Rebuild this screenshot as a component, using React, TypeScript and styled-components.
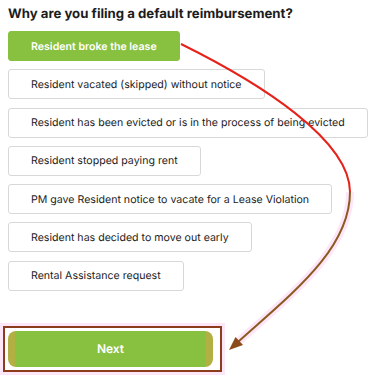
import React from "react";
import styled, { createGlobalStyle } from "styled-components";

const Global = createGlobalStyle`
  html, body { margin: 0; padding: 0; background: #ffffff; }
  body {
    font-family: Inter, "Liberation Sans", Arial, sans-serif;
    text-rendering: geometricPrecision;
  }
  button { text-rendering: geometricPrecision; }
`;

const Page = styled.div`
  position: relative;
  width: 382px;
  height: 378px;
  overflow: hidden;
  box-sizing: border-box;
  padding: 5px 8px 0 8px;
`;

const Title = styled.h1`
  margin: 0 0 8px 0;
  font-size: 13.2px;
  line-height: 18px;
  font-weight: 700;
  color: #1c1c1c;
`;

const Options = styled.div`
  display: flex;
  flex-direction: column;
  align-items: flex-start;
  gap: 8.3px;
`;

const Option = styled.button<{ $selected?: boolean }>`
  height: 30px;
  box-sizing: border-box;
  padding: 0 22px;
  border-radius: 3px;
  font-family: Inter, "Liberation Sans", Arial, sans-serif;
  font-size: 10.6px;
  font-weight: ${(p) => (p.$selected ? 600 : 400)};
  color: ${(p) => (p.$selected ? "#ffffff" : "#222222")};
  background: ${(p) => (p.$selected ? "#88c040" : "#ffffff")};
  border: 1px solid ${(p) => (p.$selected ? "#88c040" : "#d8d8d8")};
  white-space: nowrap;
  cursor: pointer;
`;

const Footer = styled.div`
  margin-top: 35px;
  margin-left: -5px;
  display: flex;
`;

const Highlight = styled.div`
  border: 2px solid #8c3c1c;
  outline: 3px solid #fde6f8;
  padding: 3px 7px 3px 3px;
`;

const NextButton = styled.button`
  width: 205px;
  height: 36px;
  border: none;
  border-radius: 8px;
  background: linear-gradient(
    to right,
    #b3b043 0,
    #b3b043 7px,
    #88c040 7px,
    #88c040 calc(100% - 7px),
    #b3b043 calc(100% - 7px)
  );
  color: #ffffff;
  font-family: Inter, "Liberation Sans", Arial, sans-serif;
  font-size: 12px;
  font-weight: 600;
  cursor: pointer;
`;

const Overlay = styled.svg`
  position: absolute;
  left: 0;
  top: 0;
  pointer-events: none;
`;

const options = [
  "Resident broke the lease",
  "Resident vacated (skipped) without notice",
  "Resident has been evicted or is in the process of being evicted",
  "Resident stopped paying rent",
  "PM gave Resident notice to vacate for a Lease Violation",
  "Resident has decided to move out early",
  "Rental Assistance request",
];

export default function App() {
  return (
    <>
      <Global />
      <Page>
        <Title>Why are you filing a default reimbursement?</Title>
        <Options>
          {options.map((o, i) => (
            <Option key={o} $selected={i === 0}>
              {o}
            </Option>
          ))}
        </Options>
        <Footer>
          <Highlight>
            <NextButton>Next</NextButton>
          </Highlight>
        </Footer>
        <Overlay width="382" height="378" viewBox="0 0 382 378">
          <path
            d="M350,192 C350,250 290,295 238,342"
            fill="none"
            stroke="#fde6f8"
            strokeWidth="8"
          />
          <path
            d="M181,44 C260,83 350,140 350,192"
            fill="none"
            stroke="#e6231b"
            strokeWidth="2"
          />
          <path
            d="M350,192 C350,250 290,295 238,342"
            fill="none"
            stroke="#8a5a1e"
            strokeWidth="2"
          />
          <polygon points="229,350 235.5,337 243,345" fill="#8a4a1a" />
        </Overlay>
      </Page>
    </>
  );
}
